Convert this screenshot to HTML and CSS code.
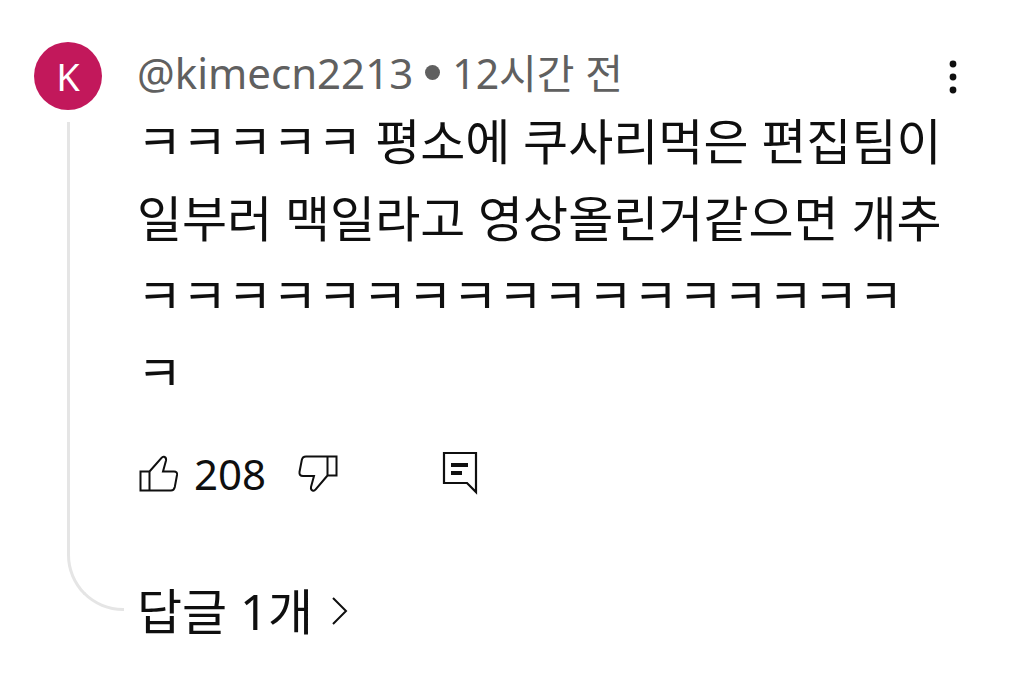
FILE: index.html
```
<!DOCTYPE html>
<html lang="ko">
<head>
<meta charset="utf-8">
<meta name="viewport" content="width=device-width, initial-scale=1">
<title>댓글</title>
<link rel="stylesheet" href="styles.css">
</head>
<body>
<article class="comment">
  <div class="rail">
    <a class="avatar" href="#">K</a>
    <div class="thread-line"></div>
  </div>
  <div class="main">
    <header class="head">
      <div class="meta"><a class="author" href="#">@kimecn2213</a><span class="dot"></span><span>12시간 전</span></div>
      <button class="icon-button more" type="button" aria-label="더보기">
        <svg width="8" height="34" viewBox="0 0 8 34" fill="currentColor"><circle cx="4" cy="4" r="3.4"/><circle cx="4" cy="17" r="3.4"/><circle cx="4" cy="30" r="3.4"/></svg>
      </button>
    </header>
    <p class="text">ㅋㅋㅋㅋㅋ 평소에 쿠사리먹은 편집팀이<br>일부러 맥일라고 영상올린거같으면 개추<br>ㅋㅋㅋㅋㅋㅋㅋㅋㅋㅋㅋㅋㅋㅋㅋㅋㅋ<br>ㅋ</p>
    <div class="actions">
      <button class="icon-button like" type="button">
        <svg width="40" height="40" viewBox="0 0 40 40" fill="none" stroke="currentColor" stroke-width="2"><path d="M2.5 18.5h9v19h-9zM11.500 18.500 23.500 5Q24.500 3.500 26 3.800Q28.500 4.500 28 7.500L25 18.500H36Q39.500 18.500 39 22L36.800 34Q36 37.500 33 37.500H11.500"/></svg>
        <span>208</span>
      </button>
      <button class="icon-button" type="button" aria-label="싫어요">
        <svg width="40" height="40" viewBox="0 0 40 40" fill="none" stroke="currentColor" stroke-width="2"><path d="M38.500 22.500h-9v-19h9zM29.500 22.500 17.500 36.500Q16.500 38 15 37.700Q12.500 37 13 34L16 23H5Q1 23 1.500 19L3.800 7Q4.500 3.500 8 3.500H29.500"/></svg>
      </button>
      <button class="icon-button reply" type="button" aria-label="답글">
        <svg width="36" height="44" viewBox="0 0 36 44" fill="none" stroke="currentColor" stroke-width="2.200"><path d="M2 2h32v39L25 32H2z"/><path d="M9 14h17M9 22h11" stroke-width="3.800"/></svg>
      </button>
    </div>
    <button class="icon-button replies" type="button"><span>답글 1개</span>
      <svg width="18" height="28" viewBox="0 0 18 28" fill="none" stroke="currentColor" stroke-width="2"><path d="m2 1 13 13L2 27"/></svg>
    </button>
  </div>
</article>
</body>
</html>
```
FILE: styles.css
```
* { box-sizing: border-box; }
body {
  margin: 0;
  background: #fff;
  color: #0f0f0f;
  font-family: "Noto Sans", "Noto Sans CJK KR", sans-serif;
}
a { color: inherit; text-decoration: none; }
svg { display: block; flex: none; }
.comment { display: flex; padding: 42px 72px 32px 34px; }
.rail { width: 103px; flex: none; display: flex; flex-direction: column; }
.avatar {
  width: 68px; height: 68px; border-radius: 50%;
  background: #c2185b; color: #fff;
  font-size: 38px; line-height: 69px; text-align: center;
}
.thread-line {
  flex: 1;
  margin: 12px 13px 36px 33px;
  border: solid #e5e5e5;
  border-width: 0 0 3px 3px;
  border-bottom-left-radius: 56px;
}
.main { flex: 1; min-width: 0; }
.head { display: flex; justify-content: space-between; align-items: center; height: 61px; }
.meta { display: flex; align-items: center; gap: 12px; color: #606060; font-size: 41px; line-height: 60px; white-space: nowrap; }
.author { font-size: 42px; }
.dot { width: 15px; height: 15px; border-radius: 50%; background: currentColor; }
.icon-button {
  display: flex; align-items: center; padding: 0; border: 0;
  background: none; color: inherit; font: inherit;
}
.more { padding-top: 8px; }
.text { margin: 0; font-size: 49px; line-height: 77px; white-space: nowrap; }
.actions { display: flex; align-items: center; height: 60px; margin-top: 32px; padding-left: 1px; font-size: 42px; }
.like { gap: 16px; margin-right: 32px; }
.reply { margin-left: 104px; }
.replies { gap: 18px; margin-top: 72px; font-size: 49px; line-height: 72px; }
```
